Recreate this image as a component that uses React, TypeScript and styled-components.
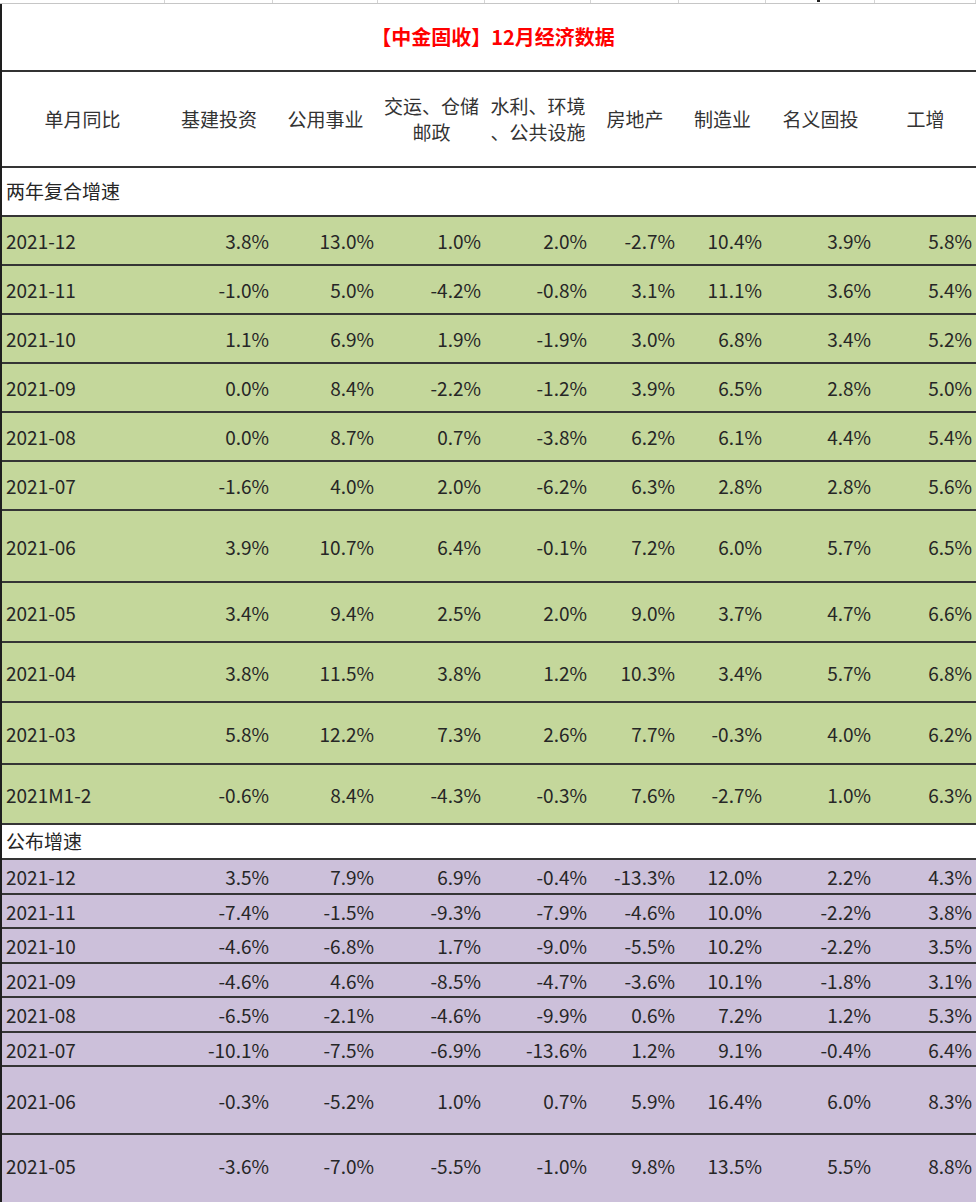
import React from "react";
import styled, { createGlobalStyle } from "styled-components";

const GlobalStyle = createGlobalStyle`
  html, body { margin: 0; padding: 0; background: #ffffff; }
  body { font-family: "Noto Sans CJK SC", "Noto Sans", sans-serif; overflow: hidden; }
`;

const COLS = "165px 108px 105px 107px 106px 88px 87px 109px 101px";
const BODY_COLS = "163px 108px 105px 107px 106px 88px 87px 109px 101px";

const Page = styled.div`
  width: 976px;
  position: relative;
`;

const Strip = styled.div`
  display: grid;
  grid-template-columns: ${COLS};
  height: 4px;
  box-sizing: border-box;
  border-bottom: 1px solid #c6c6c6;
`;

const StripCell = styled.div`
  border-right: 1px solid #d4d4d4;
`;

const Mark = styled.div`
  position: absolute;
  left: 817px;
  top: 0;
  width: 3px;
  height: 2px;
  background: #222;
`;

const Table = styled.div`
  border-left: 2px solid #1e1e1e;
  color: #262626;
  font-size: 19px;
`;

const TitleRow = styled.div`
  height: 68px;
  box-sizing: border-box;
  border-bottom: 2px solid #333;
  display: flex;
  align-items: center;
  justify-content: center;
  padding-left: 8px;
  padding-bottom: 1px;
  color: #ff0000;
  font-weight: 700;
  font-size: 20px;
`;

const Row = styled.div<{ $h: number; $bg: string }>`
  display: grid;
  grid-template-columns: ${BODY_COLS};
  height: ${(p) => p.$h}px;
  box-sizing: border-box;
  border-bottom: 2px solid #353535;
  background: ${(p) => p.$bg};
`;

const HeadCell = styled.div`
  display: flex;
  align-items: center;
  justify-content: center;
  text-align: center;
  line-height: 26px;
  color: #333;
  white-space: nowrap;
`;

const FirstHeadCell = styled(HeadCell)`
  padding-right: 2px;
`;

const LabelCell = styled.div<{ $shift?: number }>`
  display: flex;
  align-items: center;
  padding-left: 4px;
  padding-bottom: ${(p) => p.$shift || 0}px;
  white-space: nowrap;
`;

const Cell = styled.div<{ $shift?: number }>`
  display: flex;
  align-items: center;
  justify-content: flex-end;
  padding-right: 4px;
  padding-bottom: ${(p) => p.$shift || 0}px;
  white-space: nowrap;
`;

const SectionRow = styled.div<{ $h: number }>`
  height: ${(p) => p.$h}px;
  box-sizing: border-box;
  border-bottom: 2px solid #353535;
  display: flex;
  align-items: center;
  padding-left: 4px;
  padding-bottom: 2px;
`;

const GREEN = "#c4d79b";
const PURPLE = "#ccc0da";

const green: [string, number, string[]][] = [
  ["2021-12", 49, ["3.8%", "13.0%", "1.0%", "2.0%", "-2.7%", "10.4%", "3.9%", "5.8%"]],
  ["2021-11", 49, ["-1.0%", "5.0%", "-4.2%", "-0.8%", "3.1%", "11.1%", "3.6%", "5.4%"]],
  ["2021-10", 49, ["1.1%", "6.9%", "1.9%", "-1.9%", "3.0%", "6.8%", "3.4%", "5.2%"]],
  ["2021-09", 49, ["0.0%", "8.4%", "-2.2%", "-1.2%", "3.9%", "6.5%", "2.8%", "5.0%"]],
  ["2021-08", 49, ["0.0%", "8.7%", "0.7%", "-3.8%", "6.2%", "6.1%", "4.4%", "5.4%"]],
  ["2021-07", 49, ["-1.6%", "4.0%", "2.0%", "-6.2%", "6.3%", "2.8%", "2.8%", "5.6%"]],
  ["2021-06", 72, ["3.9%", "10.7%", "6.4%", "-0.1%", "7.2%", "6.0%", "5.7%", "6.5%"]],
  ["2021-05", 60, ["3.4%", "9.4%", "2.5%", "2.0%", "9.0%", "3.7%", "4.7%", "6.6%"]],
  ["2021-04", 60, ["3.8%", "11.5%", "3.8%", "1.2%", "10.3%", "3.4%", "5.7%", "6.8%"]],
  ["2021-03", 62, ["5.8%", "12.2%", "7.3%", "2.6%", "7.7%", "-0.3%", "4.0%", "6.2%"]],
  ["2021M1-2", 60, ["-0.6%", "8.4%", "-4.3%", "-0.3%", "7.6%", "-2.7%", "1.0%", "6.3%"]],
];

const purple: [string, number, string[]][] = [
  ["2021-12", 35, ["3.5%", "7.9%", "6.9%", "-0.4%", "-13.3%", "12.0%", "2.2%", "4.3%"]],
  ["2021-11", 34, ["-7.4%", "-1.5%", "-9.3%", "-7.9%", "-4.6%", "10.0%", "-2.2%", "3.8%"]],
  ["2021-10", 35, ["-4.6%", "-6.8%", "1.7%", "-9.0%", "-5.5%", "10.2%", "-2.2%", "3.5%"]],
  ["2021-09", 34, ["-4.6%", "4.6%", "-8.5%", "-4.7%", "-3.6%", "10.1%", "-1.8%", "3.1%"]],
  ["2021-08", 35, ["-6.5%", "-2.1%", "-4.6%", "-9.9%", "0.6%", "7.2%", "1.2%", "5.3%"]],
  ["2021-07", 34, ["-10.1%", "-7.5%", "-6.9%", "-13.6%", "1.2%", "9.1%", "-0.4%", "6.4%"]],
  ["2021-06", 68, ["-0.3%", "-5.2%", "1.0%", "0.7%", "5.9%", "16.4%", "6.0%", "8.3%"]],
  ["2021-05", 70, ["-3.6%", "-7.0%", "-5.5%", "-1.0%", "9.8%", "13.5%", "5.5%", "8.8%"]],
];

const headers: React.ReactNode[] = [
  "基建投资",
  "公用事业",
  <>交运、仓储<br />邮政</>,
  <>水利、环境<br />、公共设施</>,
  "房地产",
  "制造业",
  "名义固投",
  "工增",
];

function DataRow({ label, h, values, bg, shift }: { label: string; h: number; values: string[]; bg: string; shift?: number }) {
  return (
    <Row $h={h} $bg={bg}>
      <LabelCell $shift={shift}>{label}</LabelCell>
      {values.map((v, i) => (
        <Cell key={i} $shift={shift}>{v}</Cell>
      ))}
    </Row>
  );
}

export default function App() {
  return (
    <Page>
      <GlobalStyle />
      <Strip>
        {Array.from({ length: 9 }).map((_, i) => (
          <StripCell key={i} />
        ))}
      </Strip>
      <Mark />
      <Table>
        <TitleRow>【中金固收】12月经济数据</TitleRow>
        <Row $h={96} $bg="#ffffff">
          <FirstHeadCell>单月同比</FirstHeadCell>
          {headers.map((h, i) => (
            <HeadCell key={i}>
              <div>{h}</div>
            </HeadCell>
          ))}
        </Row>
        <SectionRow $h={49}>两年复合增速</SectionRow>
        {green.map(([l, h, v]) => (
          <DataRow key={"g" + l} label={l} h={h} values={v} bg={GREEN} />
        ))}
        <SectionRow $h={35}>公布增速</SectionRow>
        {purple.map(([l, h, v], i) => (
          <DataRow key={"p" + l} label={l} h={h} values={v} bg={PURPLE} shift={i === purple.length - 1 ? 8 : 0} />
        ))}
      </Table>
    </Page>
  );
}
